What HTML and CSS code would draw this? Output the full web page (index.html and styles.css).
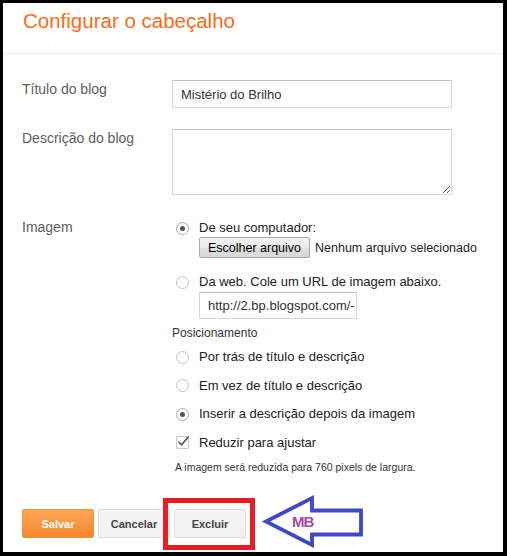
FILE: index.html
```html
<!DOCTYPE html>
<html lang="pt">
<head>
<meta charset="utf-8">
<title>Configurar o cabeçalho</title>
<link rel="stylesheet" href="styles.css">
</head>
<body>
<div class="panel">
  <header class="head"><h1 class="title">Configurar o cabeçalho</h1></header>
  <form class="form">
    <div class="row row-title">
      <label class="lbl">Título do blog</label>
      <input class="text" type="text" value="Mistério do Brilho">
    </div>
    <div class="row row-desc">
      <label class="lbl">Descrição do blog</label>
      <textarea class="area"></textarea>
    </div>
    <div class="row row-img">
      <div class="lbl">Imagem</div>
      <div class="opts">
        <div class="opt"><span class="radio on"></span><span>De seu computador:</span></div>
        <div class="file"><span class="file-btn">Escolher arquivo</span><span class="file-name">Nenhum arquivo selecionado</span></div>
        <div class="opt opt-web"><span class="radio"></span><span>Da web. Cole um URL de imagem abaixo.</span></div>
        <div class="url">http://2.bp.blogspot.com/-</div>
        <div class="pos-title">Posicionamento</div>
        <div class="opt opt-pos first"><span class="radio"></span><span>Por trás de título e descrição</span></div>
        <div class="opt opt-pos"><span class="radio"></span><span>Em vez de título e descrição</span></div>
        <div class="opt opt-pos"><span class="radio on"></span><span>Inserir a descrição depois da imagem</span></div>
        <div class="opt opt-pos"><span class="check"><svg class="check-mark" width="14" height="14" viewBox="0 0 14 14"><path d="M2.5 6.8 L5.6 9.8 L12.6 1.6" fill="none" stroke="#555" stroke-width="1.6"/></svg></span><span>Reduzir para ajustar</span></div>
        <div class="note">A imagem será reduzida para 760 pixels de largura.</div>
      </div>
    </div>
    <div class="actions">
      <button type="button" class="btn btn-save">Salvar</button>
      <button type="button" class="btn">Cancelar</button>
      <button type="button" class="btn">Excluir</button>
    </div>
  </form>
  <div class="mark-box"></div>
  <div class="arrow">
    <svg class="arrow-svg" width="105" height="57" viewBox="261 493 105 57">
      <path d="M266 521.5 L312 498 L312 510.5 L361 510.5 L361 534.5 L312 534.5 L312 545 Z" fill="#fff" stroke="#3f48cc" stroke-width="3.8" stroke-linejoin="miter"/>
    </svg>
    <span class="arrow-text">MB</span>
  </div>
</div>
</body>
</html>
```

FILE: styles.css
```css
* { box-sizing: border-box; }

html, body {
  margin: 0;
  height: 556px;
  overflow: hidden;
}

body {
  background: #000;
  padding: 3px 4px 4px 3px;
  font-family: "Liberation Sans", Arial, sans-serif;
}

.panel {
  position: relative;
  background: #fff;
  height: 100%;
}

.head {
  height: 51px;
  padding: 6px 0 0 20px;
  border-bottom: 1px solid #ebebeb;
}

.title {
  margin: 0;
  font-size: 20.5px;
  line-height: 24px;
  font-weight: normal;
  color: #fc6a17;
}

.form {
  padding: 26px 0 0 19px;
  margin: 0;
}

.row {
  display: grid;
  grid-template-columns: 150px 280px;
  align-items: start;
}

.row-desc { margin-top: 21px; }
.row-img { margin-top: 24px; }

.lbl {
  font-size: 14px;
  line-height: 16px;
  color: #5e5e5e;
  padding-top: 1px;
}

.row-img .lbl { padding-top: 0; }

.text {
  display: block;
  width: 280px;
  height: 28px;
  margin: 0;
  padding: 0 8px;
  border: 1px solid #d9d9d9;
  border-top-color: #c0c0c0;
  border-radius: 1px;
  font-family: "Liberation Sans", Arial, sans-serif;
  font-size: 13px;
  color: #333;
  background: #fff;
  outline: none;
}

.area {
  display: block;
  width: 280px;
  height: 66px;
  margin: 0;
  padding: 4px 8px;
  border: 1px solid #d9d9d9;
  border-top-color: #c0c0c0;
  border-radius: 1px;
  font-family: "Liberation Sans", Arial, sans-serif;
  font-size: 13px;
  color: #333;
  background: #fff;
  outline: none;
}

.opts {
  padding-top: 1px;
  font-size: 13px;
  color: #222;
  min-width: 0;
}

.opt {
  display: flex;
  align-items: center;
  gap: 10px;
  height: 16px;
  line-height: 16px;
  white-space: nowrap;
}

.radio {
  flex: none;
  width: 13px;
  height: 13px;
  margin-left: 4px;
  border: 1px solid #c3c3c3;
  border-radius: 50%;
  background: linear-gradient(#fafafa, #ffffff);
}

.radio.on { border-color: #a9a9a9; }

.radio.on::after {
  content: "";
  display: block;
  width: 5px;
  height: 5px;
  margin: 3px auto 0;
  border-radius: 50%;
  background: #555;
}

.check {
  position: relative;
  flex: none;
  width: 13px;
  height: 13px;
  margin-left: 4px;
  border: 1px solid #c6c6c6;
  border-radius: 1px;
  background: #fff;
}

.check-mark {
  position: absolute;
  left: -1px;
  top: -2px;
}

.file {
  display: flex;
  align-items: center;
  margin: 1px 0 0 27px;
  height: 21px;
  white-space: nowrap;
}

.file-btn {
  flex: none;
  display: inline-flex;
  align-items: center;
  justify-content: center;
  width: 111px;
  height: 21px;
  border: 1px solid #a8a8a8;
  border-radius: 2px;
  background: linear-gradient(#f4f4f4, #e9e9e9 50%, #dedede 51%, #d8d8d8);
  font-size: 12.5px;
  color: #000;
}

.file-name {
  flex: none;
  margin-left: 5px;
  font-size: 12.5px;
  color: #222;
}

.opt-web { margin-top: 16px; }

.url {
  margin: 2px 0 0 27px;
  width: 158px;
  height: 27px;
  line-height: 25px;
  padding: 0 3px 0 8px;
  border: 1px solid #d9d9d9;
  border-top-color: #c0c0c0;
  color: #333;
  white-space: nowrap;
  overflow: hidden;
}

.pos-title {
  margin-top: 6px;
  font-size: 12px;
  line-height: 16px;
  color: #333;
}

.opt-pos { margin-top: 12.5px; }
.opt-pos.first { margin-top: 8px; }

.note {
  margin: 10.5px 0 0 3px;
  font-size: 10.5px;
  line-height: 13px;
  color: #333;
  white-space: nowrap;
}

.actions {
  display: flex;
  gap: 4px;
  margin-top: 35px;
}

.btn {
  min-width: 72px;
  height: 29px;
  margin: 0;
  padding: 0 8px;
  border: 1px solid #dcdcdc;
  border-radius: 2px;
  background: linear-gradient(#f5f5f5, #f1f1f1);
  font-family: "Liberation Sans", Arial, sans-serif;
  font-size: 11px;
  font-weight: bold;
  color: #444;
}

.btn-save {
  border-color: #f0913b;
  background: linear-gradient(#fea655, #f5862c);
  color: #fff;
}

.mark-box {
  position: absolute;
  left: 160px;
  top: 495px;
  width: 92px;
  height: 52px;
  border: 5px solid #ed1c24;
}

.arrow {
  position: absolute;
  left: 258px;
  top: 490px;
  width: 105px;
  height: 57px;
}

.arrow-svg { display: block; }

.arrow-text {
  position: absolute;
  left: 31px;
  top: 20px;
  font-size: 15px;
  font-weight: bold;
  letter-spacing: -1px;
  line-height: 18px;
  color: #a349a4;
}
```
